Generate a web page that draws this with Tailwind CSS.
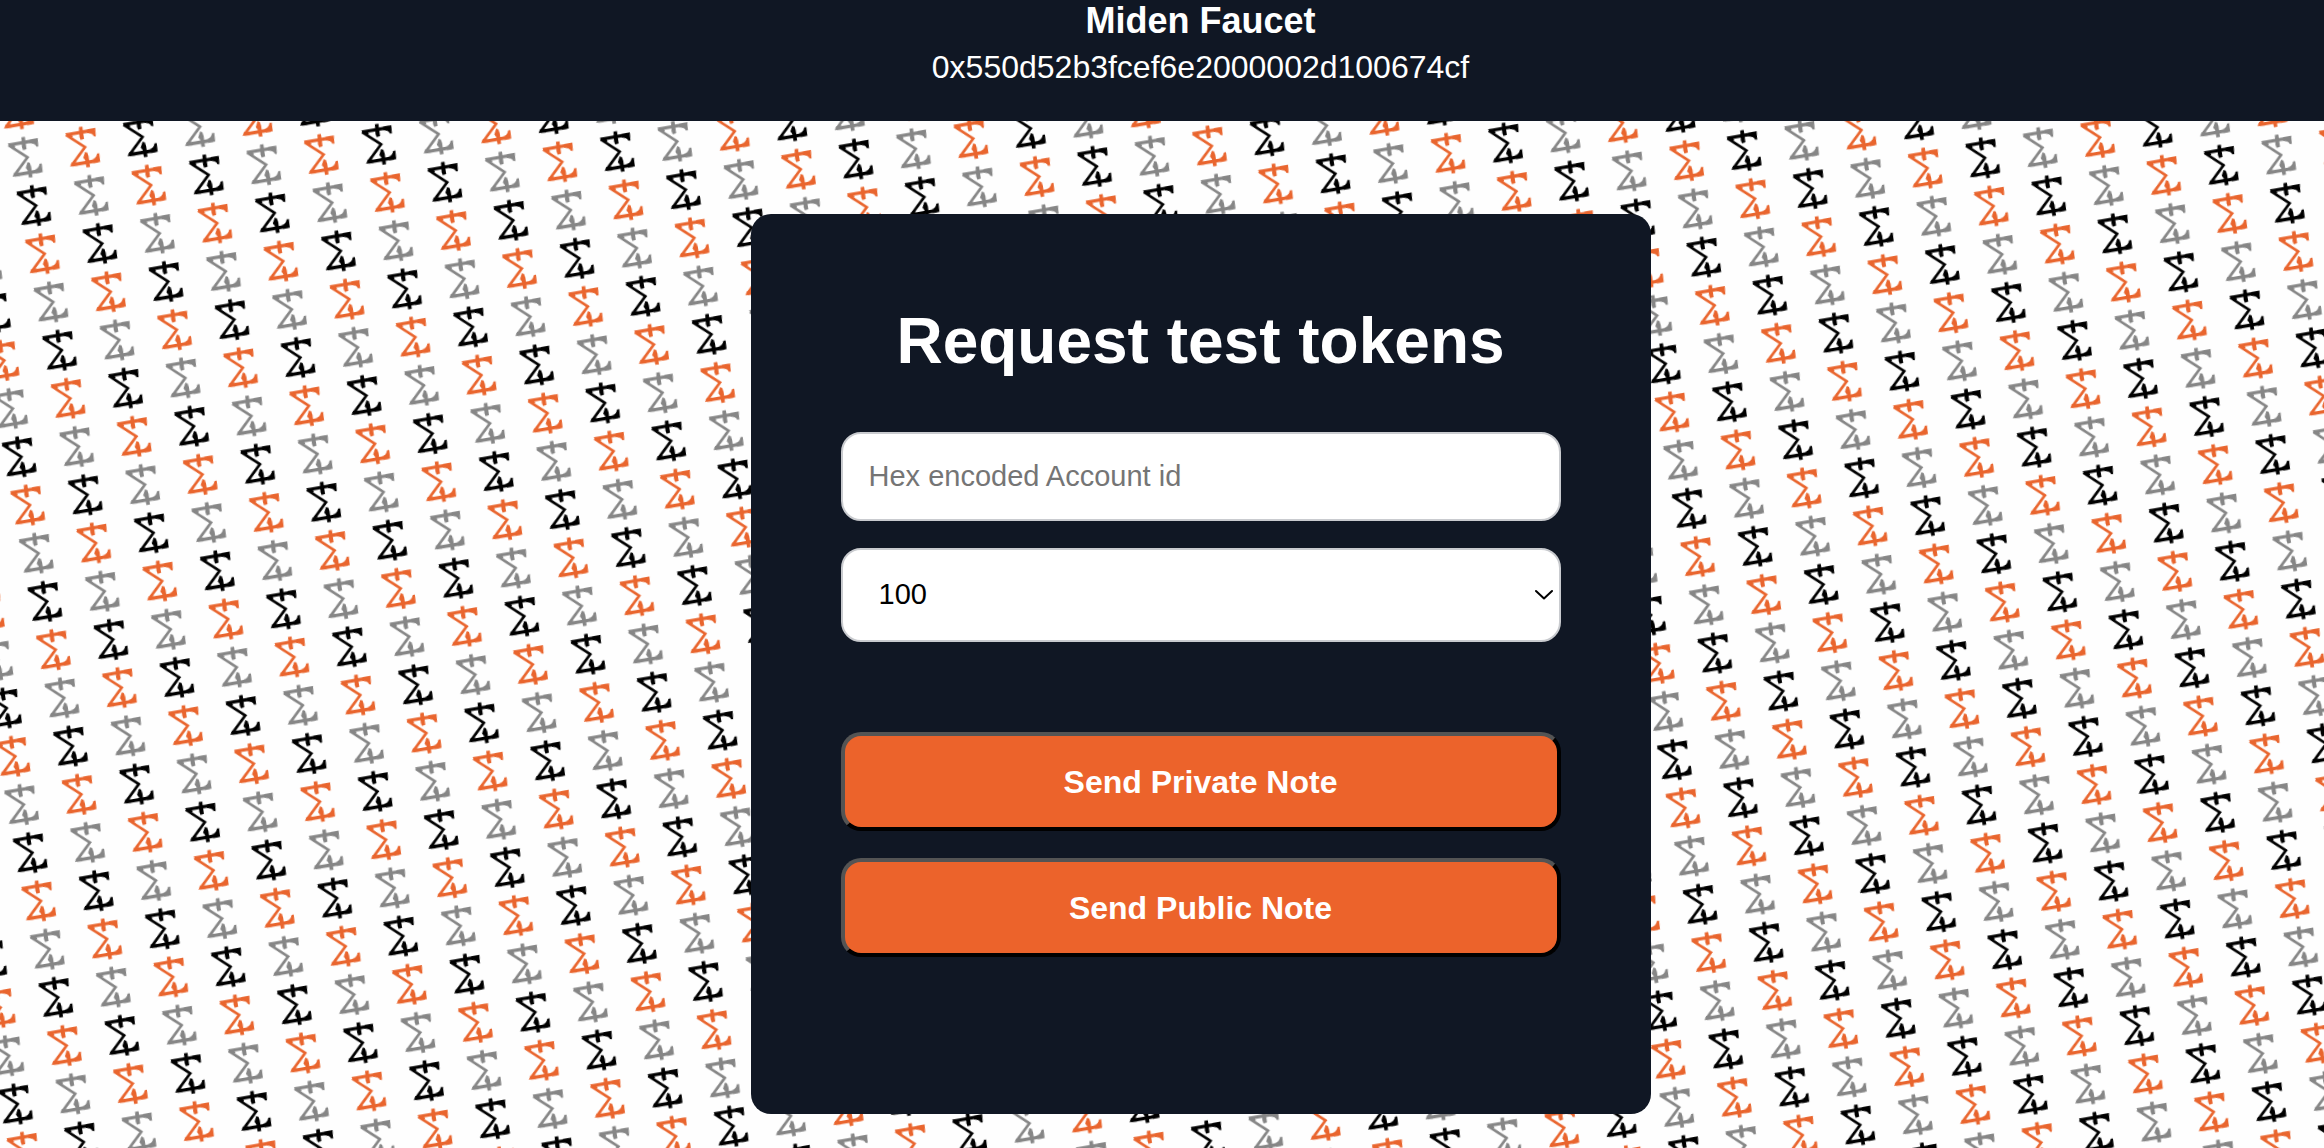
<!DOCTYPE html>
<html lang="en">

<head>
    <meta charset="UTF-8">
    <meta name="viewport" content="width=device-width, initial-scale=1.0">
    <title>Miden Faucet</title>
    <script src="https://cdn.jsdelivr.net/npm/@tailwindcss/browser@4"></script>
</head>

<body class="relative min-h-screen overflow-x-hidden bg-[#fefefe] font-['Liberation_Sans',Arial,sans-serif] text-white">
    <!-- sigma wallpaper -->
    <svg class="absolute inset-0 -z-10 h-full w-full" aria-hidden="true">
        <defs>
            <g id="sigma">
                <path fill="none" stroke="currentColor" stroke-width="2.7" d="M1 8.6L20 20.8L7 38.6" />
                <path fill="none" stroke="currentColor" stroke-width="3.3" d="M1 8.6L28 3.9M7 38.6L33 34.2" />
                <path fill="currentColor" d="M0 7.2L6 7.2L8 10.8L5 11.4ZM5 40.2L6.8 36L12 35.8L12.4 39.4ZM22 3.2L30.2 1.6L30.8 9.9L28.8 10Q27.4 6.8 22 6.8ZM27 33.4Q31.4 32 32 27.4L34.2 26.9L35.2 35.6L28.4 36.8Z" />
                <path fill="currentColor" d="M13.8 .9L17.3 .2L19 12.6L15.6 13.8L14.4 10.6ZM20 25.6L22.2 26.2L23.6 30L25 40.6L21.4 41.2L20.2 34L18.2 31.4Z" />
            </g>
            <pattern id="sigmas" width="175.2" height="146.9" patternUnits="userSpaceOnUse" patternTransform="translate(-8 138) rotate(-10.07)">
                <g class="text-[#868686]">
                    <use href="#sigma" transform="translate(29.2 24.5) rotate(10.07) translate(-17.5 -20.5)" />
                    <use href="#sigma" transform="translate(87.6 73.5) rotate(10.07) translate(-17.5 -20.5)" />
                    <use href="#sigma" transform="translate(146 122.4) rotate(10.07) translate(-17.5 -20.5)" />
                </g>
                <g class="text-black">
                    <use href="#sigma" transform="translate(29.2 73.5) rotate(10.07) translate(-17.5 -20.5)" />
                    <use href="#sigma" transform="translate(87.6 122.4) rotate(10.07) translate(-17.5 -20.5)" />
                    <use href="#sigma" transform="translate(146 24.5) rotate(10.07) translate(-17.5 -20.5)" />
                </g>
                <g class="text-[#e9652e]">
                    <use href="#sigma" transform="translate(29.2 122.4) rotate(10.07) translate(-17.5 -20.5)" />
                    <use href="#sigma" transform="translate(87.6 24.5) rotate(10.07) translate(-17.5 -20.5)" />
                    <use href="#sigma" transform="translate(146 73.5) rotate(10.07) translate(-17.5 -20.5)" />
                </g>
            </pattern>
        </defs>
        <rect width="100%" height="100%" fill="url(#sigmas)" />
    </svg>

    <header class="bg-[#101724] pb-[29px] text-center lg:pl-[77px]">
        <h1 class="text-4xl leading-[42px] font-bold">Miden Faucet</h1>
        <p class="text-[32px] leading-[50px] break-all">0x550d52b3fcef6e2000002d100674cf</p>
    </header>

    <main class="flex justify-center pt-[93px] pb-[34px] lg:pl-[77px]">
        <form class="min-h-[900px] w-full max-w-[900px] rounded-[20px] bg-[#101724] p-[90px]">
            <h2 class="mb-[54px] text-center text-[64px] leading-[74px] font-bold">Request test tokens</h2>
            <input type="text" id="account-id" aria-label="Account id" placeholder="Hex encoded Account id"
                class="block h-[89px] w-full rounded-[20px] border-2 border-[#c9cbcf] bg-white px-[26px] text-[29px] text-black placeholder:text-[#757575]">
            <div class="relative mt-[27px]">
                <select id="amount" aria-label="Token amount"
                    class="block h-[94px] w-full appearance-none rounded-[20px] border-2 border-[#c9cbcf] bg-white px-9 text-[29px] text-black">
                    <option value="100">100</option>
                    <option value="500">500</option>
                    <option value="1000">1000</option>
                </select>
                <svg class="pointer-events-none absolute inset-y-0 right-2 my-auto h-3 w-[18px]" viewBox="0 0 18 12" fill="none" stroke="#000" stroke-width="2" stroke-linecap="round" stroke-linejoin="round" aria-hidden="true">
                    <path d="M1 2l8 7.5L17 2" />
                </svg>
            </div>
            <div class="mt-[90px] flex flex-col gap-[27px]">
                <button type="button" id="button-private"
                    class="h-[99px] w-full rounded-[20px] border-4 border-t-[#545454] border-r-black border-b-black border-l-[#545454] bg-[#ec632b] text-[32px] font-bold">Send Private Note</button>
                <button type="button" id="button-public"
                    class="h-[99px] w-full rounded-[20px] border-4 border-t-[#545454] border-r-black border-b-black border-l-[#545454] bg-[#ec632b] text-[32px] font-bold">Send Public Note</button>
            </div>
        </form>
    </main>
</body>

</html>
